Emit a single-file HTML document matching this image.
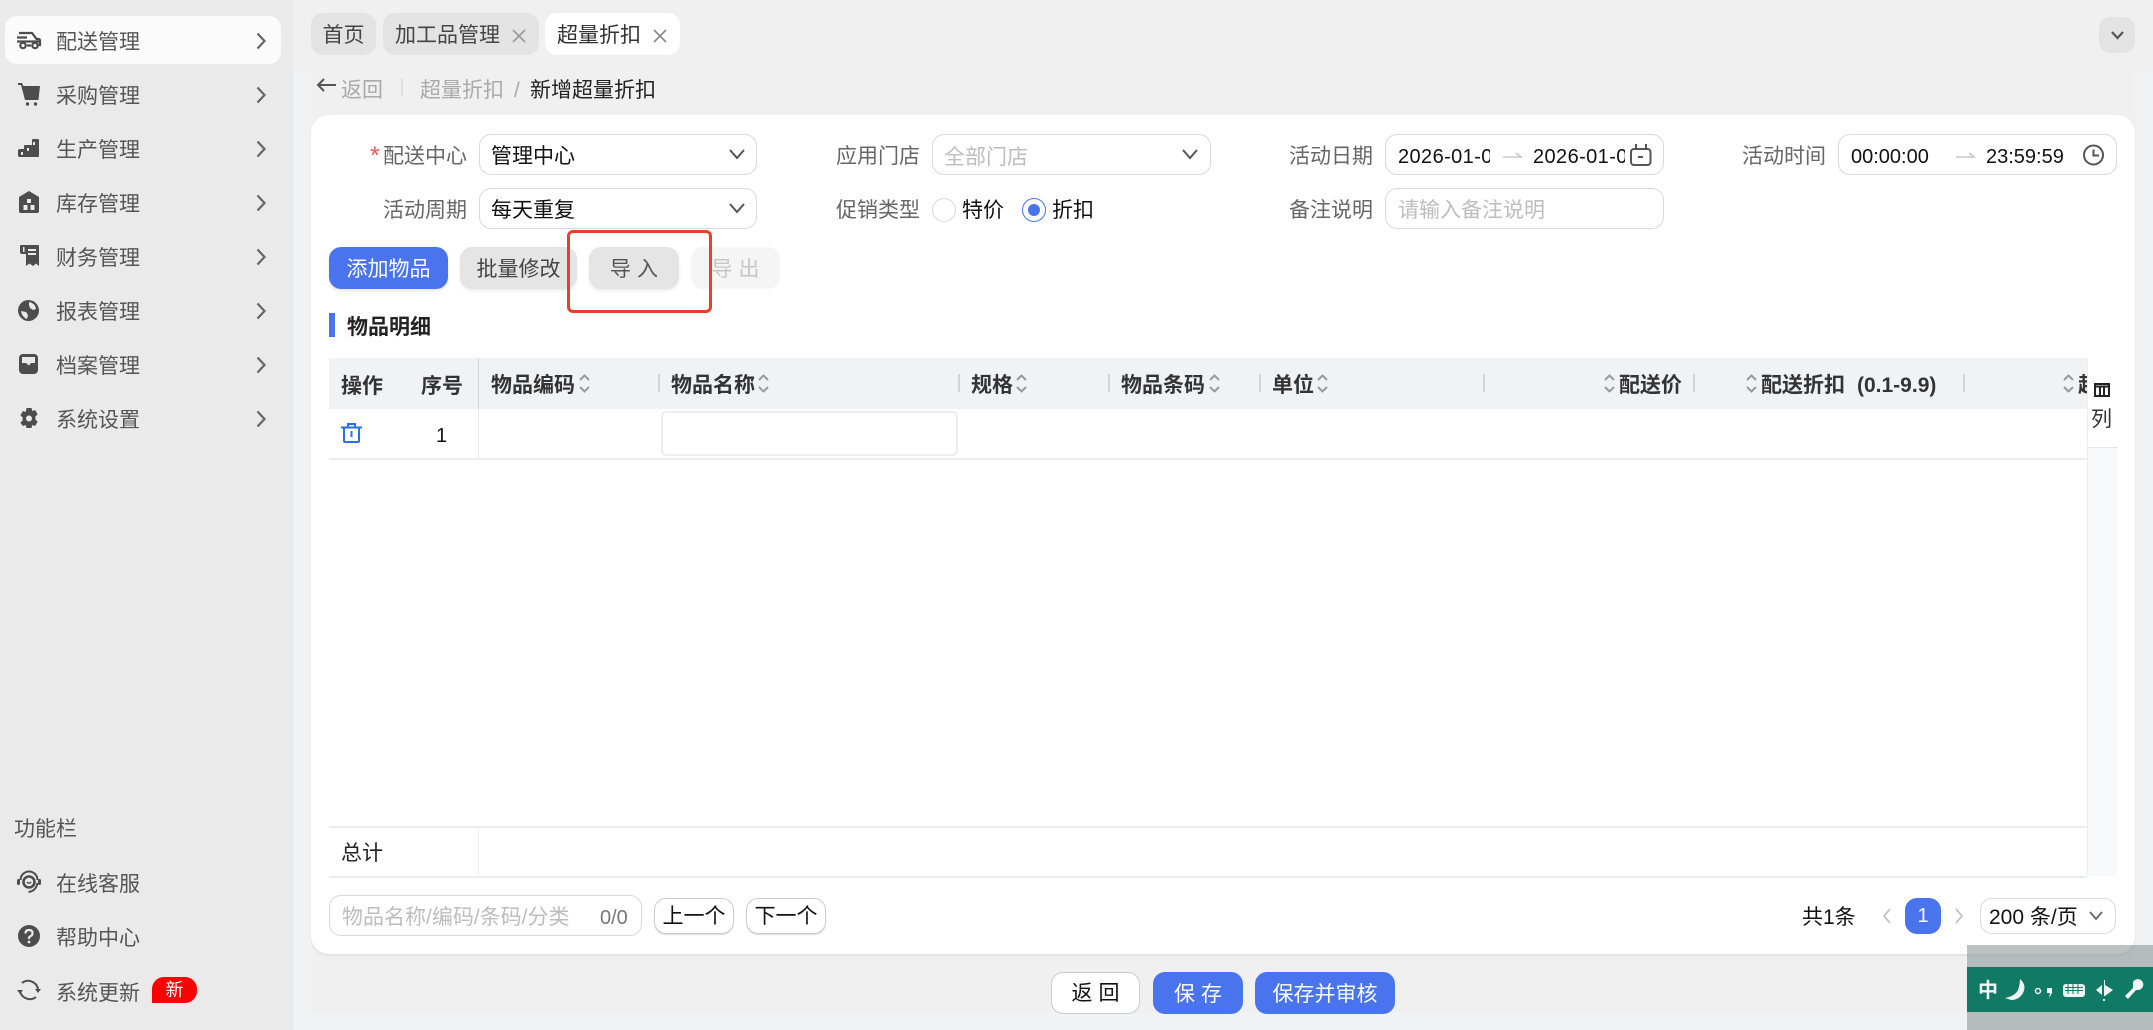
<!DOCTYPE html>
<html lang="zh-CN"><head><meta charset="utf-8"><title>新增超量折扣</title>
<style>
*{box-sizing:border-box}
html,body{margin:0;padding:0;width:2153px;height:1030px;overflow:hidden;background:#f1f2f4}
body{position:relative;font-family:"Liberation Sans","Noto Sans CJK SC",sans-serif;font-size:21px;color:#000}
.a{position:absolute}
.t{position:absolute;white-space:nowrap;line-height:30px;height:30px;margin-top:1.500px}
.b{position:absolute;font-weight:700;white-space:nowrap;line-height:30px;height:30px;color:#333;margin-top:1.500px}
.m{color:#555;margin-top:2px}
.l{color:#666}
.box{position:absolute;background:#fff;border:1.500px solid #d9d9d9;border-radius:12px}
.btn{position:absolute;border-radius:12px;text-align:center;line-height:46px;height:42px;white-space:nowrap;overflow:hidden}
.v{position:absolute;width:1.500px;height:18px;top:374px;background:#d0d3da}
svg{position:absolute;display:block;overflow:visible}
.ph{color:#bdbdbd}
</style></head><body>
<!-- backgrounds -->
<div class="a" style="left:0;top:0;width:293px;height:1030px;background:#eaeaea"></div>
<div class="a" style="left:311px;top:0;width:1824px;height:1013px;background:#f0f0f0"></div>
<div class="a" style="left:293px;top:0;width:1860px;height:70px;background:#f0f0f0"></div>
<div class="a" style="left:311px;top:115px;width:1824px;height:839px;background:#fff;border-radius:18px;box-shadow:0 2px 2px #e2e2e2"></div>

<!-- sidebar -->
<div class="a" style="left:5px;top:16px;width:276px;height:48px;background:#fbfbfb;border-radius:12px"></div>
<div class="t m" style="left:56px;top:26px">配送管理</div>
<div class="t m" style="left:56px;top:80px">采购管理</div>
<div class="t m" style="left:56px;top:134px">生产管理</div>
<div class="t m" style="left:56px;top:188px">库存管理</div>
<div class="t m" style="left:56px;top:242px">财务管理</div>
<div class="t m" style="left:56px;top:296px">报表管理</div>
<div class="t m" style="left:56px;top:350px">档案管理</div>
<div class="t m" style="left:56px;top:404px">系统设置</div>
<svg style="left:0;top:0" width="293" height="440" fill="none" stroke="#666" stroke-width="2.200">
<path d="M257.500 33.500l7 7.500-7 7.500M257.500 87.500l7 7.500-7 7.500M257.500 141.500l7 7.500-7 7.500M257.500 195.500l7 7.500-7 7.500M257.500 249.500l7 7.500-7 7.500M257.500 303.500l7 7.500-7 7.500M257.500 357.500l7 7.500-7 7.500M257.500 411.500l7 7.500-7 7.500"/>
</svg>
<svg style="left:17px;top:31px" width="24" height="18" viewBox="0 0 24 18" fill="none" stroke="#4d4d4d" stroke-width="2.200"><path d="M2 2h13l4.500 6h2q1.500 0 1.500 2v4h-2M0 6.500h10M0 10.500h22M10 14.500h4"/><circle cx="6" cy="14.500" r="2.700"/><circle cx="18" cy="14.500" r="2.700"/></svg>
<svg style="left:18px;top:83px" width="22" height="23" viewBox="0 0 22 23" fill="#4d4d4d"><path d="M0 0h4l1.500 3H22l-1.500 14H7L3 2H0z"/><circle cx="9.500" cy="21" r="1.700"/><circle cx="17.500" cy="21" r="1.700"/></svg>
<svg style="left:18px;top:139px" width="21" height="18" viewBox="0 0 21 18" fill="#4d4d4d"><path d="M14 1q0-1 1-1h5q1 0 1 1v16q0 1-1 1H2q-2 0-2-2v-4q0-2 2-2h4V7q0-1 1-1h7z"/><path fill="#eaeaea" d="M3 13h2v3H3zM9 9h2v3H9zM15 3h2v3h-2z"/></svg>
<svg style="left:19px;top:191px" width="20" height="22" viewBox="0 0 20 22" fill="#4d4d4d"><path d="M10 0l10 6v14q0 2-2 2H2q-2 0-2-2V6z"/><path fill="#eaeaea" d="M8 8h4v4H8zM4.500 14h4v5h-4zM11.500 14h4v5h-4z"/></svg>
<svg style="left:20px;top:245px" width="19" height="21" viewBox="0 0 19 21" fill="#4d4d4d"><path d="M0 1q0-1 1-1h17q1 0 1 1v20l-3-2.500-3 2.500-3.500-2.500L6 21V9H2q-2 0-2-2z"/><path fill="#eaeaea" d="M3 2h1.500v5H3zM8 4h8v2H8zM8 8h8v2H8z"/></svg>
<svg style="left:18px;top:300px" width="21" height="21" viewBox="0 0 21 21" fill="#4d4d4d"><circle cx="10.500" cy="10.500" r="10.500"/><path fill="#eaeaea" d="M11 2q6 1 7 7l-3 1-3-2-1-3zM3 11l5 1 2 3-1 4q-5-2-6-8z"/></svg>
<svg style="left:19px;top:354px" width="19" height="20" viewBox="0 0 19 20" fill="#4d4d4d"><rect width="19" height="20" rx="4"/><path fill="#eaeaea" d="M3 3h13v6h-4l-2 2.500L7 9H3z"/></svg>
<svg style="left:19px;top:408px" width="20" height="21" viewBox="0 0 20 21" fill="#4d4d4d"><path d="M7.500 0h5l.8 3 2.800-1 2.500 4.300-2.200 2.200v3l2.200 2.200-2.500 4.300-2.800-1-.8 3h-5l-.8-3-2.800 1L1.400 14.700l2.200-2.200v-3L1.400 7.300 3.900 3l2.800 1z"/><circle cx="10" cy="10.500" r="3" fill="#eaeaea"/></svg>

<div class="t m" style="left:14px;top:813px">功能栏</div>
<div class="t m" style="left:56px;top:868px">在线客服</div>
<div class="t m" style="left:56px;top:922px">帮助中心</div>
<div class="t m" style="left:56px;top:977px">系统更新</div>
<svg style="left:17px;top:871px" width="24" height="22" viewBox="0 0 24 22" fill="none" stroke="#4d4d4d"><path stroke-width="2" d="M3.500 9A8.500 8.500 0 0 1 20.500 9"/><circle cx="12" cy="11" r="5.500" stroke-width="2.600"/><path stroke-width="1.500" d="M9.800 11q2.200 2.400 4.400 0"/><path stroke-width="2" d="M20.500 12q-1.500 8-9 9"/><rect x="0" y="8" width="3" height="6" rx="1.500" fill="#4d4d4d" stroke="none"/><rect x="21" y="8" width="3" height="6" rx="1.500" fill="#4d4d4d" stroke="none"/></svg>
<svg style="left:18px;top:925px" width="22" height="22" viewBox="0 0 22 22"><circle cx="11" cy="11" r="11" fill="#4d4d4d"/><path d="M7.500 8.500q0-3.500 3.500-3.500t3.500 3.200q0 2-2 3t-1.500 2.800" fill="none" stroke="#eaeaea" stroke-width="2.200"/><circle cx="11" cy="17" r="1.400" fill="#eaeaea"/></svg>
<svg style="left:17px;top:979px" width="24" height="22" viewBox="0 0 24 22" fill="none" stroke="#4d4d4d" stroke-width="2"><path d="M5 4A10 10 0 0 1 21 10M19 18A10 10 0 0 1 3 12"/><path fill="#4d4d4d" stroke="none" d="M0 11h6l-3 4zM18 10h6l-3 4z"/></svg>
<div class="a" style="left:152px;top:977px;width:45px;height:26px;background:#fe0000;border-radius:12px 12px 12px 0;color:#fff;font-size:18px;line-height:26px;text-align:center">新</div>

<!-- tabs -->
<div class="btn" style="left:311px;top:13px;width:65px;background:#e3e3e3;color:#444">首页</div>
<div class="btn" style="left:383px;top:13px;width:156px;background:#e3e3e3;color:#444;text-align:left;padding-left:12px">加工品管理</div>
<div class="btn" style="left:545px;top:13px;width:135px;background:#fff;color:#333;text-align:left;padding-left:12px">超量折扣</div>
<svg style="left:512px;top:29px" width="14" height="14" fill="none" stroke="#999" stroke-width="1.600"><path d="M1 1l12 12M13 1L1 13"/></svg>
<svg style="left:653px;top:29px" width="14" height="14" fill="none" stroke="#888" stroke-width="1.600"><path d="M1 1l12 12M13 1L1 13"/></svg>
<div class="a" style="left:2099px;top:17px;width:36px;height:36px;background:#e3e3e3;border-radius:11px"></div>
<svg style="left:2111px;top:31px" width="13" height="9" fill="none" stroke="#555" stroke-width="2.200"><path d="M1 1l5.500 6L12 1"/></svg>

<!-- breadcrumb -->
<svg style="left:316px;top:78px" width="20" height="14" fill="none" stroke="#555" stroke-width="2"><path d="M20 7H2M8 1L2 7l6 6"/></svg>
<div class="t" style="left:341px;top:74px;color:#aaa">返回</div>
<div class="a" style="left:401px;top:78px;width:1.500px;height:18px;background:#e0e0e0"></div>
<div class="t" style="left:420px;top:74px;color:#aaa">超量折扣</div>
<div class="t" style="left:514px;top:74px;color:#aaa">/</div>
<div class="t" style="left:530px;top:74px;color:#222">新增超量折扣</div>

<!-- form row 1 -->
<div class="t" style="left:370px;top:139px;color:#f5534f;font-size:25px">*</div>
<div class="t l" style="left:383px;top:140px">配送中心</div>
<div class="box" style="left:479px;top:134px;width:278px;height:41px"></div>
<div class="t" style="left:491px;top:140px;color:#111">管理中心</div>
<div class="t l" style="left:836px;top:140px">应用门店</div>
<div class="box" style="left:932px;top:134px;width:279px;height:41px"></div>
<div class="t ph" style="left:944px;top:141px">全部门店</div>
<div class="t l" style="left:1289px;top:140px">活动日期</div>
<div class="box" style="left:1385px;top:134px;width:279px;height:41px"></div>
<div class="t" style="left:1398px;top:140px;font-size:20px;letter-spacing:.4px;width:92px;overflow:hidden;color:#111">2026-01-01</div>
<div class="t" style="left:1533px;top:140px;font-size:20px;letter-spacing:.4px;width:92px;overflow:hidden;color:#111">2026-01-01</div>
<div class="t l" style="left:1742px;top:140px">活动时间</div>
<div class="box" style="left:1838px;top:134px;width:279px;height:41px"></div>
<div class="t" style="left:1851px;top:140px;font-size:20px;color:#111">00:00:00</div>
<div class="t" style="left:1986px;top:140px;font-size:20px;color:#111">23:59:59</div>
<svg style="left:0;top:0" width="2153" height="240" fill="none" stroke="#555" stroke-width="2">
<path d="M730 150l7 8 7-8M1183 150l7 8 7-8"/>
<path stroke="#c8c8c8" stroke-width="1.600" d="M1503 157h18l-5-4M1956 157h18l-5-4"/>
<rect x="1631" y="149" width="19.500" height="16" rx="3"/><path d="M1636 144v5M1646 144v5M1638 157h5"/>
<circle cx="2093.500" cy="155" r="9.500"/><path d="M2093.500 149.500v6h5.500"/>
</svg>

<!-- form row 2 -->
<div class="t l" style="left:383px;top:194px">活动周期</div>
<div class="box" style="left:479px;top:188px;width:278px;height:41px"></div>
<div class="t" style="left:491px;top:194px;color:#111">每天重复</div>
<svg style="left:730px;top:204px" width="14" height="8" fill="none" stroke="#555" stroke-width="2"><path d="M0 0l7 8 7-8"/></svg>
<div class="t l" style="left:836px;top:194px">促销类型</div>
<div class="a" style="left:932px;top:198px;width:24px;height:24px;border:1.500px solid #d9d9d9;border-radius:50%;background:#fff"></div>
<div class="t" style="left:962px;top:194px;color:#111">特价</div>
<div class="a" style="left:1022px;top:198px;width:24px;height:24px;border:1.500px solid #4a74ee;border-radius:50%;background:#fff"></div>
<div class="a" style="left:1028px;top:204px;width:12px;height:12px;border-radius:50%;background:#4a74ee"></div>
<div class="t" style="left:1052px;top:194px;color:#111">折扣</div>
<div class="t l" style="left:1289px;top:194px">备注说明</div>
<div class="box" style="left:1385px;top:188px;width:279px;height:41px"></div>
<div class="t ph" style="left:1398px;top:194px">请输入备注说明</div>

<!-- buttons -->
<div class="btn" style="left:329px;top:247px;width:119px;background:#4a74ee;color:#fff;box-shadow:0 2px 3px #e6e6e6">添加物品</div>
<div class="btn" style="left:460px;top:247px;width:117px;background:#e5e5e5;color:#444;box-shadow:0 2px 3px #eee">批量修改</div>
<div class="btn" style="left:589px;top:247px;width:90px;background:#e5e5e5;color:#555;letter-spacing:6px;padding-left:6px;box-shadow:0 2px 3px #eee">导入</div>
<div class="btn" style="left:691px;top:247px;width:89px;background:#f5f5f5;color:#c6c6c6;letter-spacing:6px;padding-left:6px">导出</div>
<div class="a" style="left:567px;top:230px;width:145px;height:83px;border:3px solid #e8402a;border-radius:6px"></div>

<div class="a" style="left:329px;top:313px;width:6px;height:24px;background:#4a74ee"></div>
<div class="b" style="left:347px;top:311px;color:#222">物品明细</div>

<!-- table header -->
<div class="a" style="left:329px;top:358px;width:1758px;height:51px;background:#f1f2f4;overflow:hidden">
<div class="b" style="left:1749px;top:11px">超量</div>
</div>
<div class="a" style="left:478px;top:358px;width:1px;height:51px;background:#d0d3da"></div>
<div class="b" style="left:341px;top:370px">操作</div>
<div class="b" style="left:421px;top:370px">序号</div>
<div class="b" style="left:491px;top:369px">物品编码</div>
<div class="b" style="left:671px;top:369px">物品名称</div>
<div class="b" style="left:971px;top:369px">规格</div>
<div class="b" style="left:1121px;top:369px">物品条码</div>
<div class="b" style="left:1272px;top:369px">单位</div>
<div class="b" style="left:1619px;top:369px">配送价</div>
<div class="b" style="left:1761px;top:369px">配送折扣</div>
<div class="b" style="left:1857px;top:369px">(0.1-9.9)</div>
<div class="v" style="left:658px"></div><div class="v" style="left:958px"></div><div class="v" style="left:1108px"></div><div class="v" style="left:1259px"></div><div class="v" style="left:1483px"></div><div class="v" style="left:1693px"></div><div class="v" style="left:1963px"></div>
<svg style="left:0;top:0" width="2153" height="400" fill="none" stroke="#9a9a9a" stroke-width="2">
<path d="M580 380l4.500-4.500 4.500 4.500M580 387l4.500 4.500 4.500-4.500M759 380l4.500-4.500 4.500 4.500M759 387l4.500 4.500 4.500-4.500M1017 380l4.500-4.500 4.500 4.500M1017 387l4.500 4.500 4.500-4.500M1210 380l4.500-4.500 4.500 4.500M1210 387l4.500 4.500 4.500-4.500M1318 380l4.500-4.500 4.500 4.500M1318 387l4.500 4.500 4.500-4.500M1605 380l4.500-4.500 4.500 4.500M1605 387l4.500 4.500 4.500-4.500M1747 380l4.500-4.500 4.500 4.500M1747 387l4.500 4.500 4.500-4.500M2064 380l4.500-4.500 4.500 4.500M2064 387l4.500 4.500 4.500-4.500"/>
</svg>
<!-- column toggle -->
<div class="a" style="left:2087px;top:358px;width:31px;height:518px;background:#f8f9fb"></div>
<div class="a" style="left:2087px;top:358px;width:31px;height:90px;background:#fff;border-left:1px solid #eee;border-bottom:1.500px solid #e6e6e6"></div>
<svg style="left:2094px;top:383px" width="16" height="14" fill="none" stroke="#222" stroke-width="2"><path d="M1 1h14v12H1zM1 3.500h14M6 3.500V13M10 3.500V13"/></svg>
<div class="t" style="left:2091px;top:403px;color:#333">列</div>

<!-- row 1 -->
<div class="a" style="left:329px;top:458px;width:1758px;height:1.500px;background:#ececec"></div>
<div class="a" style="left:478px;top:409px;width:1px;height:49px;background:#e6e8ee"></div>
<svg style="left:341px;top:423px" width="21" height="20" viewBox="0 0 21 20" fill="none" stroke="#2a6ee8" stroke-width="2"><path d="M0 4.500h21M3 4.500V18q0 1 1 1h13q1 0 1-1V4.500M7 4V1h7v3M10.500 8v6"/></svg>
<div class="t" style="left:436px;top:419px;color:#111;font-size:20px">1</div>
<div class="a" style="left:661px;top:411px;width:297px;height:45px;background:#fff;border:2.500px solid #ededed;border-radius:5px"></div>

<!-- total -->
<div class="a" style="left:329px;top:826px;width:1758px;height:1.500px;background:#ececec"></div>
<div class="a" style="left:329px;top:876px;width:1758px;height:1.500px;background:#ececec"></div>
<div class="a" style="left:478px;top:826px;width:1px;height:50px;background:#eee"></div>
<div class="a" style="left:2087px;top:448px;width:1px;height:428px;background:#eee"></div>
<div class="t" style="left:341px;top:837px;color:#222">总计</div>

<!-- search / pager -->
<div class="box" style="left:329px;top:895px;width:313px;height:41px"></div>
<div class="t ph" style="left:342px;top:901px">物品名称/编码/条码/分类</div>
<div class="t" style="left:600px;top:901px;color:#777;font-size:20px">0/0</div>
<div class="btn" style="left:654px;top:898px;width:80px;height:36px;line-height:36px;background:#fff;border:1.500px solid #ccc;color:#111;box-shadow:0 1px 1px #ddd">上一个</div>
<div class="btn" style="left:746px;top:898px;width:80px;height:36px;line-height:36px;background:#fff;border:1.500px solid #ccc;color:#111;box-shadow:0 1px 1px #ddd">下一个</div>
<div class="t" style="left:1802px;top:901px;color:#111">共1条</div>
<svg style="left:0;top:880px" width="2153" height="60" fill="none" stroke="#c4c4c4" stroke-width="1.800"><path d="M1890 29l-6 7 6 7M1956 29l6 7-6 7"/></svg>
<div class="btn" style="left:1905px;top:898px;width:36px;height:36px;line-height:36px;background:#4a74ee;color:#fff;font-size:20px">1</div>
<div class="btn" style="left:1980px;top:898px;width:136px;height:36px;background:#fff;border:1.500px solid #d9d9d9"></div>
<div class="t" style="left:1989px;top:901px;color:#111;font-size:21px">200 条/页</div>
<svg style="left:2089px;top:911px" width="14" height="9" fill="none" stroke="#666" stroke-width="1.800"><path d="M1 1l6 7 6-7"/></svg>

<!-- footer -->
<div class="btn" style="left:1051px;top:972px;width:89px;background:#fff;border:1.500px solid #ccc;color:#111;letter-spacing:6px;padding-left:6px;line-height:42px">返回</div>
<div class="btn" style="left:1153px;top:972px;width:90px;background:#4a74ee;color:#fff;letter-spacing:6px;padding-left:6px;line-height:45px">保存</div>
<div class="btn" style="left:1255px;top:972px;width:140px;background:#4a74ee;color:#fff;line-height:45px">保存并审核</div>

<!-- IME overlay -->
<div class="a" style="left:1967px;top:945px;width:186px;height:85px;background:rgba(120,133,131,.5)"></div>
<div class="a" style="left:1967px;top:967px;width:186px;height:45px;background:#117a64"></div>
<div class="t" style="left:1978px;top:974px;color:#f2f7f5;font-weight:700;font-size:20px">中</div>
<svg style="left:2005px;top:979px" width="140" height="24" fill="#eef5f3">
<path d="M15 0q7 6 3 14-4 7-12 7L0 19q10-2 13-8 2-6 2-11z"/>
<circle cx="33" cy="12" r="2.500" fill="none" stroke="#eef5f3" stroke-width="1.500"/><path d="M42 9h5v5l-3 5 1-5h-3z"/>
<rect x="58" y="5" width="22" height="13" rx="3"/><path fill="none" stroke="#117a64" stroke-width="1" d="M60 8.500h18M60 11.500h18M63 5v10M68 5v10M73 5v10"/>
<path d="M100 1v5l8 5-8 6h-1V1zM97 6v10l-6-5zM98 20h2v2h-2z"/>
<path d="M128 3a5.500 5.500 0 1 1 6 8l-3 0-8 9-3-3 8-8z"/>
</svg>
</body></html>
